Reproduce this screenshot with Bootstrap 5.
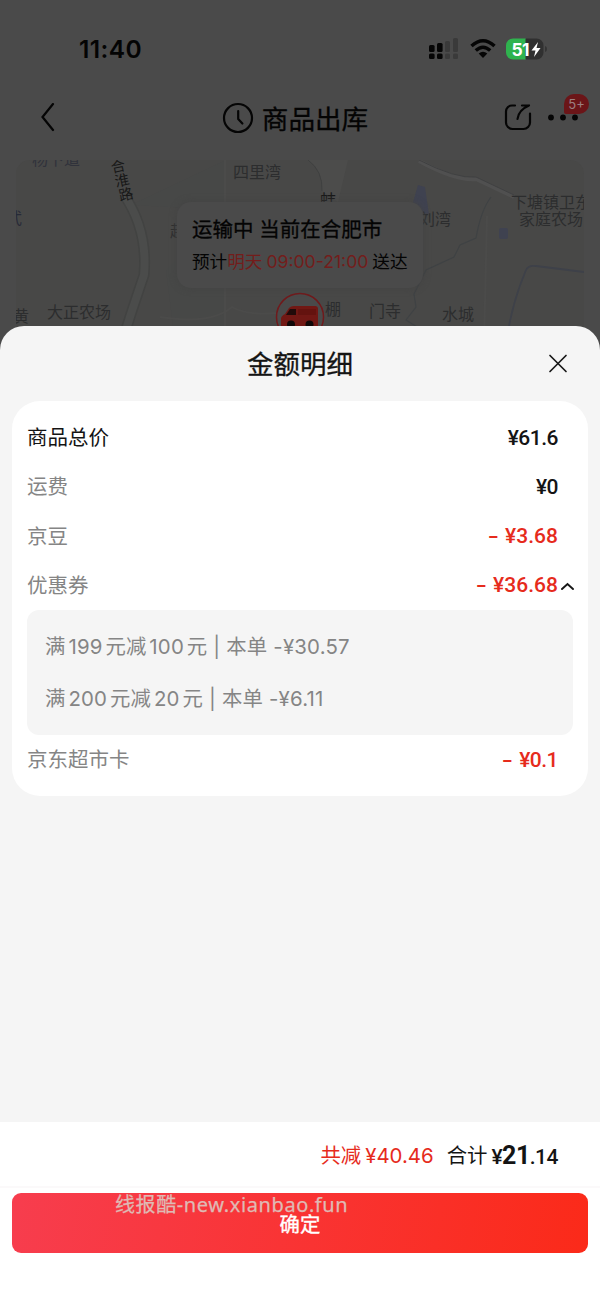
<!DOCTYPE html>
<html lang="zh-CN">
<head>
<meta charset="utf-8">
<meta name="viewport" content="width=device-width, initial-scale=1">
<title>金额明细</title>
<link href="https://cdn.jsdelivr.net/npm/bootstrap@5.3.0/dist/css/bootstrap.min.css" rel="stylesheet">
<style>
body{font-family:Inter,"Noto Sans CJK SC",sans-serif;background:#4a4a4a;color:#141414;width:600px;height:1304px;overflow:hidden}
.backdrop-page{height:350px;background:#4a4a4a;color:#040404}
.status{height:96px;padding:1px 53px 0 79px}
.clock{font-size:24.5px;font-weight:600;letter-spacing:.4px;padding-top:1px}
.titlebar{height:64px;padding:0 19px 20px 40px}
.page-name{font-size:26.6px;line-height:30px;padding-top:2px;-webkit-text-stroke:.3px currentColor}
.count{left:17px;top:-20px;width:25px;height:20px;border-radius:10px 10px 10px 2px;background:#6b1518;color:#9b7f80;font-size:13px;line-height:20px}
.map-card{margin:0 16px;height:190px;border-radius:14px;background:#484847}
.map-text{font-family:"Noto Sans CJK SC",sans-serif;font-size:16px;fill:#2c2d2e}
.tip{left:161px;top:42px;width:246px;height:86px;border-radius:14px;background:#4a4a4a;padding:13px 0 0 15px;box-shadow:0 0 7px #434343;white-space:nowrap}
.tip-title{font-size:20.5px;line-height:29px;-webkit-text-stroke:.3px currentColor}
.tip-sub{font-size:17.6px;line-height:35px}
.tip-sub b{font-weight:400;color:#731d1b}
.sheet{height:978px;margin-top:-24px;border-radius:24px 24px 0 0;background:#f5f5f5}
.sheet-head{height:75px;padding:0 31px}
.sheet-title{font-size:26.5px;padding-top:3px;-webkit-text-stroke:.3px currentColor}
.detail{margin:0 12px;padding:13px 15px 11px;border-radius:28px}
.line{height:49.2px;font-size:20.5px;padding-right:15px}
.muted{color:#858585}
.money{font-family:Roboto,"Liberation Sans",sans-serif;font-weight:500;font-size:21px;letter-spacing:-.5px}
.money.red{letter-spacing:.05px}
.minus{display:inline-block;width:9px;transform:scaleX(1.5);transform-origin:left;margin-right:8px}
.red{color:#e62b1c}
.coupons{height:125px;margin-top:-1px;margin-bottom:1px;border-radius:12px;background:#f5f5f5;padding:11px 18px;font-size:20.4px;line-height:52px;letter-spacing:.2px;color:#858585}
.coupons i{font-style:normal;margin:0 2.8px}
.foot{height:182px}
.sum{height:66px;padding:4px 42px 0 0;font-size:20.4px;border-bottom:2px solid #fbf9fa}
.confirm{height:60px;margin:5px 12px 0;border-radius:9px;border:0;background:linear-gradient(100deg,#f73d4e,#fb2a19);color:#fff;font-size:20.4px;font-weight:400;-webkit-text-stroke:.35px #fff}
.confirm span{display:block;padding-top:4px}
.mark-text{left:115px;top:69px;font-family:"Noto Sans","Noto Sans CJK SC",sans-serif;font-size:20px;line-height:28px;letter-spacing:.6px;color:#dfbab4;-webkit-text-stroke:.25px #dfbab4;white-space:nowrap}
</style>
</head>
<body>
<div class="backdrop-page">
  <div class="status d-flex align-items-center justify-content-between">
    <span class="clock">11:40</span>
    <div class="d-flex align-items-center">
      <svg width="31" height="22" class="me-2"><g fill="#050505"><rect x="2" y="7" width="5.600" height="7" rx="1.5"/><rect x="2" y="15.500" width="5.600" height="5.500" rx="1.5"/><rect x="10" y="5" width="5.600" height="9" rx="1.5"/><rect x="10" y="15.500" width="5.600" height="5.500" rx="1.5"/></g><g fill="#3a3a3a"><rect x="18" y="3" width="5" height="11" rx="1.5"/><rect x="18" y="15.500" width="5" height="5.500" rx="1.5"/><rect x="26" y="0" width="5" height="14" rx="1.5"/><rect x="26" y="15.500" width="5" height="5.500" rx="1.5"/></g></svg>
      <svg width="28" height="22" style="margin:0 9px 0 2px"><g fill="none" stroke="#050505" stroke-width="3.500"><path d="M3.500 8Q15-2.500 26.500 8"/><path d="M7.800 12.500Q15 6 22.200 12.500"/></g><path d="M10.700 15.500Q15 12 19.300 15.500L15 20Z" fill="#050505"/></svg>
      <svg width="42" height="22"><path d="M8 .5h13v21H8a7 7 0 0 1-7-7v-7a7 7 0 0 1 7-7" fill="#2fb34e"/><path d="M20.500 .5h11a7 7 0 0 1 7 7v7a7 7 0 0 1-7 7h-11Z" fill="#303030"/><path d="M40 8q2 .5 2 3t-2 3Z" fill="#343434"/><text x="6.500" y="17.500" font-size="17.500" font-weight="700" fill="#fff" textLength="18">51</text><path d="M33 4L26.500 12.500h4L29 19 35.500 10h-4Z" fill="#fff"/></svg>
    </div>
  </div>
  <div class="titlebar d-flex align-items-center justify-content-between">
    <svg width="16" height="30" fill="none" stroke="#050505" stroke-width="2.200" stroke-linecap="round"><path d="M13 1L2.500 14L13 27"/></svg>
    <div class="d-flex align-items-center" style="margin-left:30px"><svg width="32" height="32" class="me-2" fill="none" stroke="#050505" stroke-width="2.200" stroke-linecap="round" stroke-linejoin="round"><circle cx="16" cy="16" r="14"/><path d="M16.200 9v8l4.200 4.500"/></svg><span class="page-name">商品出库</span></div>
    <div class="d-flex align-items-center">
      <svg width="28" height="28" style="margin-right:15px" fill="none" stroke="#050505" stroke-width="2.200" stroke-linecap="round" stroke-linejoin="round"><path d="M11 1.500H8a6 6 0 0 0-6 6v11A6.500 6.500 0 0 0 8.500 25h11a6.500 6.500 0 0 0 6.500-6.500V9.500"/><path d="M18 1.500h7M25 1.500Q14.500 6 13.500 15"/></svg>
      <div class="position-relative d-flex"><svg width="34" height="8" fill="#050505"><circle cx="4" cy="3.500" r="2.900"/><circle cx="16" cy="3.500" r="2.900"/><circle cx="28" cy="3.500" r="2.900"/></svg><span class="count position-absolute text-center">5+</span></div>
    </div>
  </div>
  <div class="map-card position-relative overflow-hidden">
    <svg width="568" height="190" fill="none" class="d-block">
      <path d="M115 45L210 0V190H160L150 110L210 50Z" fill="#464748" opacity=".5"/>
      <path d="M108 35Q132 70 128 115Q116 150 105 185" stroke="#424342" stroke-width="11"/><path d="M108 35Q132 70 128 115Q116 150 105 185" stroke="#4b4c4b" stroke-width="8"/>
      <path d="M209 0V185M471 56L468 185M144 157Q195 165 216 147Q232 156 260 153" stroke="#4b4b4a" stroke-width="2"/>
      <path d="M292 0Q307 11 306 31L322 42L332 0" fill="#4c4c4b"/><path d="M292 0Q307 11 306 31" stroke="#3f4040"/>
      <path d="M403 1Q440 21 460 19L498 37" stroke="#505050" stroke-width="4"/><path d="M403 0Q440 19 460 17L498 35" stroke="#404142"/>
      <path d="M475 37Q465 50 460 78L444 85L438 97L410 110L398 134L400 147L390 160L406 170" stroke="#3f4244" stroke-width="1.200"/>
      <path d="M490 185Q495 145 510 110Q512 105 520 106L568 112" stroke="#3e4149" stroke-width="1.800"/>
      <path d="M402 25L409 27L411 41L413 54L400 52L397 42Z" fill="#3f4250"/><rect x="483" y="68" width="9" height="11" rx="2" fill="#3f4250"/>
      <g class="map-text">
        <text x="16" y="5" fill="#30323b">杨下道</text>
        <text x="217" y="17.500">四里湾</text><text x="31" y="157.500">大正农场</text>
        <text x="403" y="65">刘湾</text><text x="495" y="48">下塘镇卫东</text><text x="503" y="65" textLength="64">家庭农场</text>
        <text x="353" y="157">门寺</text><text x="426" y="160">水城</text><text x="309" y="155">棚</text>
        <text x="-3" y="162">黄</text><text x="-10" y="64" style="fill:#272a38">武</text><text x="154" y="77">赵</text><text x="304" y="46" style="fill:#181818">蚌</text>
        <g style="fill:#181818;font-size:14.500px"><text transform="translate(96 13) rotate(-12)">合</text><text transform="translate(100 27) rotate(-12)">淮</text><text transform="translate(104 41) rotate(-12)">路</text></g>
      </g>
      <circle cx="284" cy="157" r="23.500" fill="#4a4a4a" stroke="#70191b" stroke-width="1.500"/>
      <path d="M265 168V159Q265 156 269 154L273 148Q275 146 278 146H299Q302 146 302 149V168Z" fill="#711814"/><path d="M270 155L274 149H280V155Z" fill="#210b0a"/><path d="M282 149h18v6h-18Z" fill="#64130f"/><circle cx="275" cy="164.500" r="4" fill="#100808"/><circle cx="293.500" cy="164.500" r="4" fill="#100808"/>
    </svg>
    <div class="tip position-absolute"><div class="tip-title">运输中 当前在合肥市</div><div class="tip-sub">预计<b>明天<span class="ms-1">09:00-21:00</span></b><span class="ms-1">送达</span></div></div>
  </div>
</div>
<main class="sheet position-relative d-flex flex-column">
  <div class="sheet-head d-flex align-items-center justify-content-between">
    <span style="width:22px"></span><span class="sheet-title">金额明细</span>
    <svg width="22" height="22" stroke="#171717" stroke-width="1.700" stroke-linecap="round"><path d="M3 2.500L19 18.500M19 2.500L3 18.500"/></svg>
  </div>
  <section class="detail bg-white">
    <div class="line d-flex align-items-center justify-content-between"><span>商品总价</span><span class="money">¥61.6</span></div>
    <div class="line d-flex align-items-center justify-content-between"><span class="muted">运费</span><span class="money">¥0</span></div>
    <div class="line d-flex align-items-center justify-content-between"><span class="muted">京豆</span><span class="money red"><span class="minus">-</span>¥3.68</span></div>
    <div class="line d-flex align-items-center justify-content-between"><span class="muted">优惠券</span><span class="money red position-relative"><span class="minus">-</span>¥36.68<svg class="position-absolute top-50 start-100 translate-middle-y" width="16" height="10" fill="none" stroke="#171717" stroke-width="1.900" stroke-linecap="round"><path d="M4 8L9.500 3L15 8"/></svg></span></div>
    <div class="coupons">
      <div>满<i>199</i>元减<i>100</i>元 | 本单 -¥30.57</div>
      <div>满<i>200</i>元减<i>20</i>元 | 本单 -¥6.11</div>
    </div>
    <div class="line d-flex align-items-center justify-content-between"><span class="muted">京东超市卡</span><span class="money red" style="letter-spacing:-.5px"><span class="minus">-</span>¥0.1</span></div>
  </section>
  <footer class="foot bg-white mt-auto position-relative">
    <div class="sum d-flex align-items-center justify-content-end"><span class="red">共减<span class="ms-1">¥40.46</span></span><span style="margin-left:13px">合计</span><span class="money ms-1">¥<span class="fw-bold" style="font-size:25px">21</span>.14</span></div>
    <div class="d-grid"><button class="confirm btn p-0" type="button"><span>确定</span></button></div>
    <span class="mark-text position-absolute">线报酷-new.xianbao.fun</span>
  </footer>
</main>
<script src="https://cdn.jsdelivr.net/npm/bootstrap@5.3.0/dist/js/bootstrap.bundle.min.js"></script>
</body>
</html>
